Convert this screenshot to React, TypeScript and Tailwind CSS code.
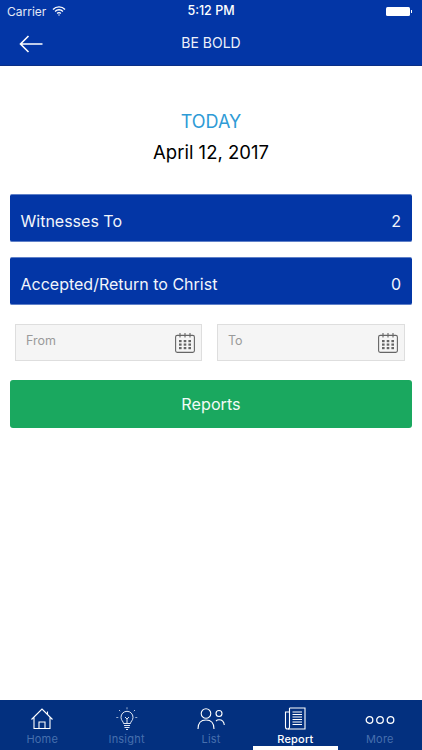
import React from "react";

const Cal = () => (
  <svg width="22" height="22" viewBox="0 0 22 22" fill="none" stroke="#666" strokeWidth="1.1">
    <rect x="1.6" y="3.4" width="18.8" height="17" rx="1.6" />
    <path d="M6 1v4.400M11 1v4.400M16 1v4.400" />
    <g fill="#666" stroke="none">
      <rect x="5" y="8" width="2.6" height="2.2" /><rect x="9.7" y="8" width="2.6" height="2.2" /><rect x="14.4" y="8" width="2.6" height="2.2" />
      <rect x="5" y="11.500" width="2.6" height="2.2" /><rect x="9.7" y="11.500" width="2.6" height="2.2" /><rect x="14.4" y="11.500" width="2.6" height="2.2" />
      <rect x="5" y="15" width="2.6" height="2.2" /><rect x="9.7" y="15" width="2.6" height="2.2" /><rect x="14.4" y="15" width="2.6" height="2.2" />
    </g>
  </svg>
);

const Row = ({ label, value }: { label: string; value: string }) => (
  <div className="h-12 pt-[5px] rounded-[2px] bg-[#0336a6] border-t border-b border-[#5f80c8] flex items-center justify-between pl-[10.5px] pr-[11px] text-[#f2f5fb] text-[16px]">
    <span>{label}</span>
    <span>{value}</span>
  </div>
);

const Field = ({ label, className }: { label: string; className: string }) => (
  <div className={`${className} h-[37px] bg-[#f5f5f5] border border-[#dedede] flex items-center justify-between pl-[10px] pr-[5px] text-[12.5px] text-[#9a9a9a]`}>
    <span className="mb-[2px]">{label}</span>
    <Cal />
  </div>
);

const Tab = ({ label, active, children }: { label: string; active?: boolean; children: React.ReactNode }) => (
  <div className="relative flex-1 h-full flex flex-col items-center">
    <div className="h-[32px] flex items-end justify-center pb-[1px]">{children}</div>
    <span className={`text-[11px] leading-[13px] mt-[1px] tracking-[0.2px] ${active ? "text-white font-medium" : "text-[#466fae]"}`}>{label}</span>
    {active && <div className="absolute bottom-0 left-0 right-0 h-[4px] bg-white" />}
  </div>
);

export default function App() {
  return (
    <div className="w-[422px] h-[750px] bg-white flex flex-col overflow-hidden font-['Inter','Liberation_Sans',sans-serif]">
      <header className="h-[66px] bg-[#0336a6] border-b border-[#0a2f86] text-white shrink-0">
        <div className="h-[22px] pt-[1px] flex items-center relative px-[7px] text-[12px]">
          <span className="text-[#e4e9f5]">Carrier</span>
          <svg className="ml-[6px] mb-[2px]" width="14" height="10" viewBox="0 0 14 10" fill="none" stroke="#fff" strokeWidth="1.4">
            <path d="M1 3.4a8.4 8.4 0 0 1 12 0" />
            <path d="M3.1 5.4a5.4 5.4 0 0 1 7.8 0" />
            <path d="M5.2 7.4a2.5 2.5 0 0 1 3.6 0" />
            <circle cx="7" cy="9" r=".7" fill="#fff" stroke="none" />
          </svg>
          <span className="absolute left-0 right-0 text-center text-[12.5px] font-medium">5:12 PM</span>
          <div className="ml-auto flex items-center mr-[3px]">
            <div className="w-[24px] h-[9px] bg-white rounded-[1.5px]" />
            <div className="w-[1px] h-[3px] bg-white ml-[1px]" />
          </div>
        </div>
        <div className="h-[43px] flex items-center relative pl-[19px]">
          <svg width="24" height="18" viewBox="0 0 24 18" fill="none" stroke="#fff" strokeWidth="1.6">
            <path d="M23.5 9H1.5M9.5 1L1.5 9l8 8" />
          </svg>
          <span className="absolute left-0 right-0 text-center text-[14px] leading-[20px] mb-[2px] text-[#eef1fa]">BE BOLD</span>
        </div>
      </header>

      <main className="flex-1 px-[10px]">
        <div className="pt-[44px] text-center text-[18px] leading-[24px] text-[#2e9bd6]">TODAY</div>
        <div className="mt-[6px] text-center text-[18.5px] leading-[24px] text-black">April 12, 2017</div>
        <div className="mt-[30px] flex flex-col gap-[15px]">
          <Row label="Witnesses To" value="2" />
          <Row label="Accepted/Return to Christ" value="0" />
        </div>
        <div className="mt-[19px] pl-[5px] flex gap-[15px]">
          <Field label="From" className="w-[187px]" />
          <Field label="To" className="w-[188px]" />
        </div>
        <div className="mt-[19px] h-12 rounded-[3px] bg-[#1aa85f] flex items-center justify-center text-[#f2fbf6] text-[16.2px]">Reports</div>
      </main>

      <nav className="h-[50px] bg-[#03307f] shrink-0 flex">
        <Tab label="Home">
          <svg width="24" height="24" viewBox="0 0 24 24" fill="none" stroke="#fff" strokeWidth="1.1">
            <path d="M1.500 12.500L12 2l10.500 10.500M4 10.500V21.500h16V10.500M9 21.500v-6.500h6v6.500M17.500 4.500v3" />
          </svg>
        </Tab>
        <Tab label="Insight">
          <svg width="22" height="24" viewBox="0 0 22 24" fill="none" stroke="#dfe6f4" strokeWidth="1">
            <path d="M7.500 16.500c0-2-2.500-3-2.500-6.200a6 6 0 0 1 12 0c0 3.200-2.500 4.200-2.500 6.200zM8 18.500h6M8.500 20.500h5M10 22.500h2M9 10l2 2 2-2M11 12v4" />
            <path d="M11 .5v2M3 3l1.400 1.400M19 3l-1.400 1.400M.5 10.500h2M19.500 10.500h2" strokeDasharray="1.2 .6" />
          </svg>
        </Tab>
        <Tab label="List">
          <svg width="28" height="22" viewBox="0 0 28 22" fill="none" stroke="#fff" strokeWidth="1.1" className="mb-[1px]">
            <circle cx="9" cy="5.500" r="4.800" />
            <path d="M1 21c0-6.500 3.500-9 8-9s8 2.500 8 9" />
            <circle cx="22" cy="5.500" r="3" />
            <path d="M19 13c.8-.8 1.800-1.200 3-1.200 3 0 5 2 5.300 5.200" />
          </svg>
        </Tab>
        <Tab label="Report" active>
          <svg width="22" height="23" viewBox="0 0 22 23" fill="none" stroke="#fff" strokeWidth="1.1" className="mb-[1px]">
            <path d="M5.500 1h15.500v21H4" />
            <path d="M5.500 5H1.500v15a2 2 0 0 0 2 2 2 2 0 0 0 2-2V1" />
            <path d="M8.500 5h9.500M8.500 7.500h9.500M8.500 10h9.500M8.500 12.500h9.500M8.500 15h9.500M8.500 17.500h9.500" />
          </svg>
        </Tab>
        <Tab label="More">
          <svg width="30" height="10" viewBox="0 0 30 10" fill="none" stroke="#fff" strokeWidth="1.300" className="mb-[6px]">
            <circle cx="4.500" cy="5" r="3.300" /><circle cx="15" cy="5" r="3.300" /><circle cx="25.500" cy="5" r="3.300" />
          </svg>
        </Tab>
      </nav>
    </div>
  );
}
